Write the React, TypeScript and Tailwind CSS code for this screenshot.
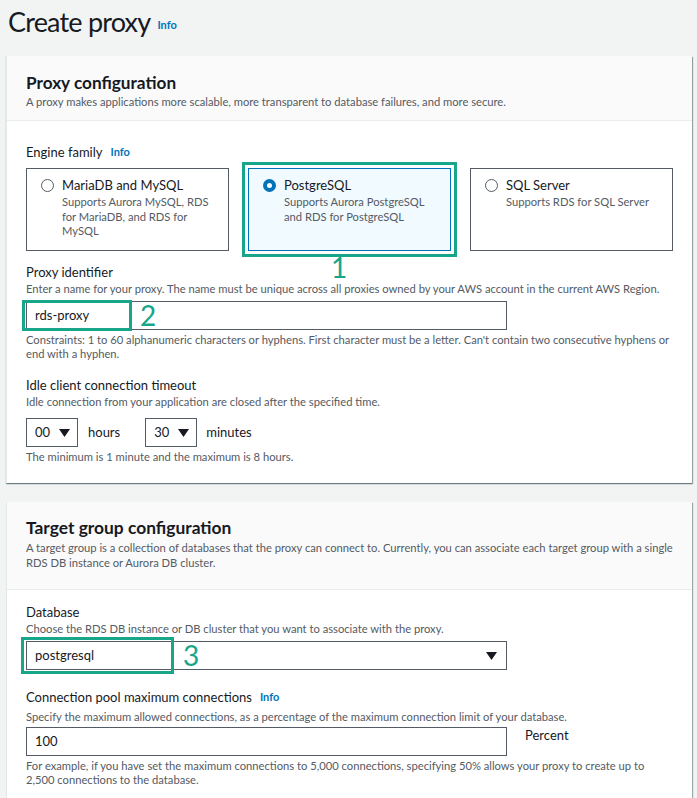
import React from "react";

const GREEN = "border-[#17a689]";

function Tri() {
  return (
    <svg width="11" height="8" viewBox="0 0 11 8" className="shrink-0">
      <path d="M0 0 L11 0 L5.5 8 Z" fill="#16191f" />
    </svg>
  );
}

function Info({ className = "" }: { className?: string }) {
  return <span className={`text-[11px] font-bold text-[#0073bb] ${className}`}>Info</span>;
}

function Radio({ checked }: { checked?: boolean }) {
  return checked ? (
    <span className="mt-[3px] w-[13px] h-[13px] rounded-full border-[4px] border-[#0073bb] bg-white shrink-0" />
  ) : (
    <span className="mt-[3px] w-[13px] h-[13px] rounded-full border border-[#545b64] bg-white shrink-0" />
  );
}

function Card({ title, desc, checked }: { title: string; desc: string; checked?: boolean }) {
  return (
    <div
      className={`relative h-[83px] w-[203px] border ${
        checked ? "border-[#0073bb] bg-[#f1faff]" : "border-[#545b64] bg-white"
      } px-[14px] pt-[7px] flex gap-[8px]`}
    >
      <Radio checked={checked} />
      <div>
        <div className="text-[13px] leading-[18px] text-[#16191f]">{title}</div>
        <div className="text-[11.2px] leading-[14.5px] text-[#545b64] mt-[1px]">{desc}</div>
      </div>
      {checked && (
        <div className={`absolute left-[-7px] top-[-7px] w-[215px] h-[95px] border-[3px] ${GREEN}`} />
      )}
    </div>
  );
}

export default function App() {
  return (
    <div
      className="min-h-[798px] w-[697px] bg-[#f2f3f3] text-[#16191f] overflow-hidden"
      style={{ fontFamily: "Lato, 'Open Sans', sans-serif" }}
    >
      <div className="flex items-end pl-[8px] h-[42px]">
        <h1 className="text-[27px] leading-[34px] tracking-[-0.8px] text-[#16191f] mb-[3px]">Create proxy</h1>
        <Info className="ml-[7px] mb-[9px]" />
      </div>

      {/* Panel 1 */}
      <div className="ml-[6px] mt-[14px] w-[686px] bg-white border-l border-[#e4e7e7] shadow-[1px_1px_1px_0_rgba(0,28,36,0.35),0_1px_1px_0_rgba(0,28,36,0.3)]">
        <div className="bg-[#fafafa] border-b border-[#eaeded] px-[19px] pt-[16px] pb-[10px]">
          <h2 className="text-[17.2px] leading-[22px] font-bold">Proxy configuration</h2>
          <p className="text-[11.2px] leading-[16px] text-[#545b64]">
            A proxy makes applications more scalable, more transparent to database failures, and more secure.
          </p>
        </div>
        <div className="px-[19px] pt-[22px] pb-[18px]">
          <div className="flex items-center gap-[8px] text-[13px] leading-[18px]">
            <span>Engine family</span>
            <Info />
          </div>
          <div className="mt-[7px] flex gap-[19px]">
            <Card title="MariaDB and MySQL" desc="Supports Aurora MySQL, RDS for MariaDB, and RDS for MySQL" />
            <Card checked title="PostgreSQL" desc="Supports Aurora PostgreSQL and RDS for PostgreSQL" />
            <Card title="SQL Server" desc="Supports RDS for SQL Server" />
          </div>

          <div className="relative mt-[12px]">
            <span className="absolute left-[305px] top-[-12px] text-[28px] leading-[32px] text-[#17a689] font-normal">1</span>
            <div className="text-[13px] leading-[18px]">Proxy identifier</div>
            <div className="text-[11.2px] leading-[16px] text-[#545b64]">
              Enter a name for your proxy. The name must be unique across all proxies owned by your AWS account in the current AWS Region.
            </div>
          </div>
          <div className="relative mt-[4px] h-[29px] w-[481px] border border-[#545b64] flex items-center px-[8px] text-[13px]">
            rds-proxy
            <div className={`absolute left-[-5px] top-[-2px] w-[110px] h-[31px] border-[3px] ${GREEN}`} />
            <span className="absolute left-[113px] top-[-3px] text-[28px] leading-[32px] text-[#17a689] font-normal">2</span>
          </div>
          <div className="mt-[3px] text-[11.2px] leading-[14px] text-[#545b64]">
            Constraints: 1 to 60 alphanumeric characters or hyphens. First character must be a letter. Can't contain two consecutive hyphens or end with a hyphen.
          </div>

          <div className="mt-[15px] text-[13px] leading-[18px]">Idle client connection timeout</div>
          <div className="text-[11.2px] leading-[16px] text-[#545b64]">
            Idle connection from your application are closed after the specified time.
          </div>
          <div className="mt-[8px] flex items-center text-[13px]">
            <div className="h-[29px] w-[52px] border border-[#545b64] flex items-center gap-[9px] pl-[8px]">
              <span>00</span>
              <Tri />
            </div>
            <span className="ml-[10px]">hours</span>
            <div className="ml-[25px] h-[29px] w-[52px] border border-[#545b64] flex items-center gap-[9px] pl-[8px]">
              <span>30</span>
              <Tri />
            </div>
            <span className="ml-[9px]">minutes</span>
          </div>
          <div className="mt-[2px] text-[11.2px] leading-[16px] text-[#545b64]">
            The minimum is 1 minute and the maximum is 8 hours.
          </div>
        </div>
      </div>

      {/* Panel 2 */}
      <div className="ml-[6px] mt-[19px] w-[686px] h-[320px] bg-white border-l border-[#e4e7e7] shadow-[1px_1px_1px_0_rgba(0,28,36,0.35)]">
        <div className="bg-[#fafafa] border-b border-[#eaeded] px-[19px] pt-[15px] pb-[19px]">
          <h2 className="text-[17.4px] leading-[22px] font-bold">Target group configuration</h2>
          <p className="mt-[1px] text-[11.2px] leading-[15px] text-[#545b64]">
            A target group is a collection of databases that the proxy can connect to. Currently, you can associate each target group with a single RDS DB instance or Aurora DB cluster.
          </p>
        </div>
        <div className="px-[19px] pt-[13px]">
          <div className="text-[13px] leading-[18px]">Database</div>
          <div className="text-[11.2px] leading-[16px] text-[#545b64]">
            Choose the RDS DB instance or DB cluster that you want to associate with the proxy.
          </div>
          <div className="relative mt-[4px] h-[29px] w-[481px] border border-[#545b64] flex items-center justify-between pl-[8px] pr-[9px] text-[13px]">
            <span>postgresql</span>
            <Tri />
            <div className={`absolute left-[-6px] top-[-5px] w-[153px] h-[37px] border-[3px] ${GREEN}`} />
            <span className="absolute left-[156px] top-[-3px] text-[28px] leading-[32px] text-[#17a689] font-normal">3</span>
          </div>

          <div className="mt-[18px] flex items-center gap-[8px] text-[13px] leading-[18px]">
            <span>Connection pool maximum connections</span>
            <Info />
          </div>
          <div className="mt-[3px] text-[11.2px] leading-[16px] text-[#545b64]">
            Specify the maximum allowed connections, as a percentage of the maximum connection limit of your database.
          </div>
          <div className="mt-[2px] flex items-start">
            <div className="h-[29px] w-[481px] border border-[#545b64] flex items-center px-[8px] text-[13px]">100</div>
            <span className="ml-[18px] mt-0 text-[13px] leading-[16px]">Percent</span>
          </div>
          <div className="mt-[3px] text-[11.2px] leading-[14px] text-[#545b64]">
            For example, if you have set the maximum connections to 5,000 connections, specifying 50% allows your proxy to create up to 2,500 connections to the database.
          </div>
        </div>
      </div>
    </div>
  );
}
